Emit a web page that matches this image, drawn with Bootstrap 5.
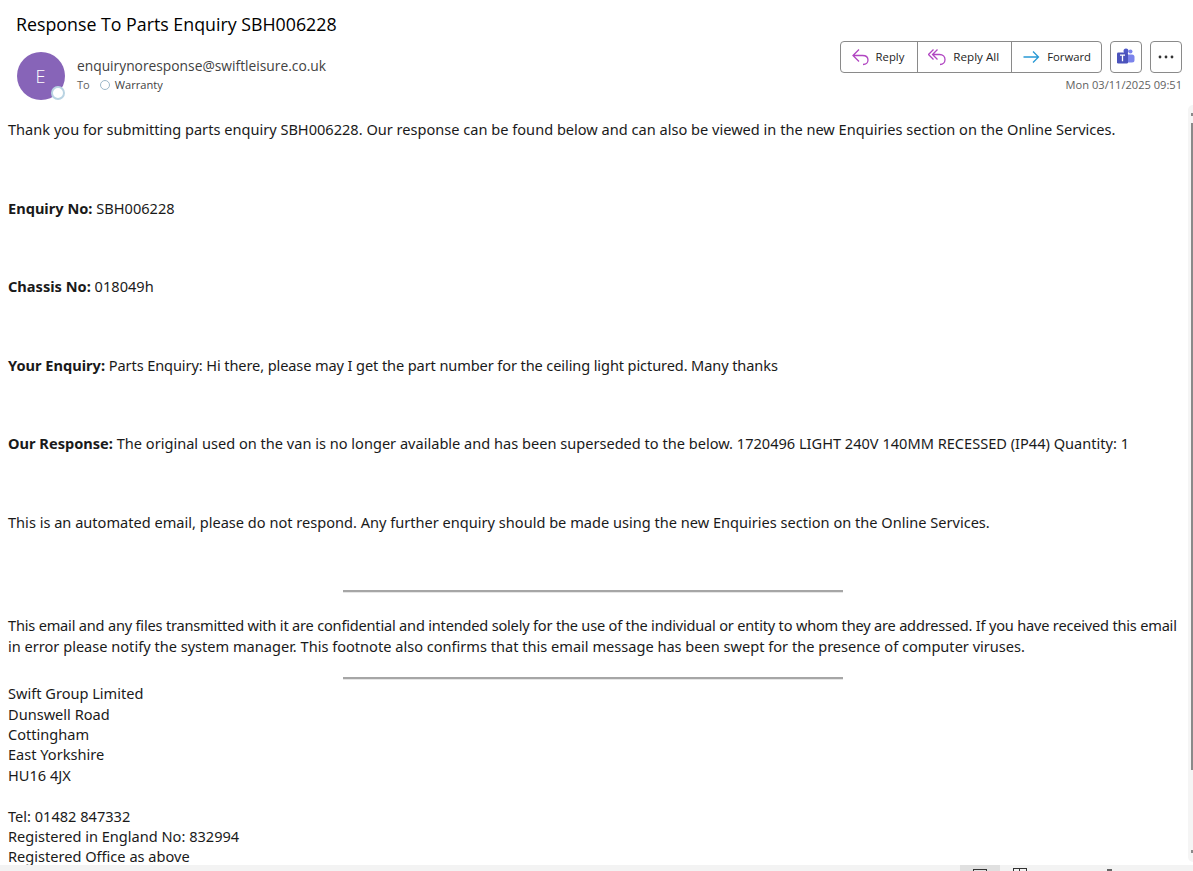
<!doctype html>
<html lang="en"><head><meta charset="utf-8">
<link href="https://cdn.jsdelivr.net/npm/bootstrap@5.3.0/dist/css/bootstrap.min.css" rel="stylesheet">
<style>
html,body{height:100%;overflow:hidden;background:#fff}
.mail-shell{height:871px;display:flex;flex-direction:column;font-family:"Open Sans","Noto Sans",sans-serif;color:#242424}
.mail-main{flex:1;min-height:0;overflow:hidden;position:relative}
.mail-head{height:103px;padding:12px 11px 0 16px}
.mail-subject{font-size:17.8px;line-height:24px;color:#000;margin:0}
.sender-wrap{margin:16px 0 0 1px;gap:12px}
.avatar{width:48px;height:48px;border-radius:50%;background:#8764b8;color:#fff;font-size:18px;font-weight:300;padding-right:1px}
.presence{position:absolute;right:0;bottom:0;width:14px;height:14px;border-radius:50%;background:#fff;border:2px solid #b9d3e2}
.pres-small{display:inline-block;width:10px;height:10px;border-radius:50%;border:1px solid #9db8c9;margin:0 5px 0 10px;vertical-align:-1px}
.sender{font-size:13.8px;line-height:19px;color:#424242;margin-top:4px}
.recips{font-size:11.1px;line-height:16px;color:#424242;margin-top:2px}
.recips .to-lbl{color:#616161}
.right-wrap{margin-top:5px}
.act-group{border:1px solid #8a8a8a;border-radius:4px;height:32px;background:#fff}
.act-btn{height:30px;display:flex;align-items:center;font-size:11.3px;color:#242424;border-right:1px solid #8a8a8a;padding:0 12px 0 10px;gap:7px}
.act-btn:first-child{padding-right:13px}
.act-btn:last-child{border-right:0;padding-right:10px}
.act-btn.wide{font-size:11.65px}
.act-btn svg{width:18px;height:18px;flex-shrink:0}
.act-square{width:32px;height:32px;border:1px solid #8a8a8a;border-radius:4px;display:flex;align-items:center;justify-content:center;background:#fff}
.stamp{font-size:11.1px;line-height:16px;color:#616161;text-align:right;margin-top:4px}
.mail-body{padding:16px 15px 0 8px;height:762px;overflow:hidden;font-family:"Noto Sans",sans-serif;font-size:14.58px;color:#1a1a1a;line-height:20.4px}
.mail-body p{margin:0}
.mail-body b{font-size:14.6px}
.mail-body .gap-para{margin-bottom:58.2px}
.mail-body .gap-last{margin-bottom:58px}
.mail-body .legal{margin:22px 0 21px}
.mail-body .addr{margin-top:3px}
.squeeze-a{letter-spacing:-.11px}
.squeeze-b{letter-spacing:-.2px}
.rule{width:500px;height:3px;margin:0 auto;border-top:2px solid #a6a6a6;border-bottom:1px solid #e6e6e6}
.track{position:absolute;right:0;top:105px;height:757px;width:5px;background:#f5f5f5;border-radius:6px 0 0 6px}
.thumb{position:absolute;right:0;top:18px;width:2px;height:647px;background:#8a8a8a}
.tick{position:absolute;right:0;width:2px;height:3px;background:#8a8a8a}
.status-bar{height:6px;background:#f3f3f3;position:relative;overflow:hidden}
.st-active{position:absolute;left:960px;top:0;width:40px;height:6px;background:#e0e0e0}
.st-ico{position:absolute;border:1px solid #333;width:14px;height:10px;top:4px}
.st-book{top:3px}
.st-book::after{content:"";position:absolute;left:5px;top:0;width:1px;height:10px;background:#333}
.st-dot{position:absolute;left:1107px;top:4px;width:5px;height:3px;background:#666}
</style></head>
<body>
<div class="mail-shell">
<div class="mail-main">
 <div class="mail-head">
  <h1 class="mail-subject fw-normal">Response To Parts Enquiry SBH006228</h1>
  <div class="d-flex justify-content-between">
   <div class="d-flex sender-wrap">
    <div class="avatar position-relative d-flex align-items-center justify-content-center flex-shrink-0">E<span class="presence"></span></div>
    <div><div class="sender">enquirynoresponse@swiftleisure.co.uk</div>
    <div class="recips"><span class="to-lbl">To</span><span class="pres-small"></span>Warranty</div></div>
   </div>
   <div class="right-wrap">
    <div class="d-flex gap-2 align-items-center">
     <div class="act-group d-flex">
      <div class="act-btn"><svg viewBox="0 0 18 18" fill="none" stroke="#b146c2" stroke-width="1.3"><path d="M8 1.500 2 7.500l6 6M2 7.500h9.500c3.500 0 5.500 2 5.500 4.500s-2 4.500-5 4.500"/></svg>Reply</div>
      <div class="act-btn wide"><svg viewBox="0 0 18 18" fill="none" stroke="#b146c2" stroke-width="1.3"><path d="M5.500 1.500 0.500 6.500l5 5M9.500 1.500 4.500 6.500l5 5M4.500 6.500h7c3.500 0 5.500 2.300 5.500 5s-2 5-5 5"/></svg>Reply All</div>
      <div class="act-btn"><svg viewBox="0 0 18 18" fill="none" stroke="#2899d5" stroke-width="1.3"><path d="M1.500 9h15M11 3.500l5.500 5.500-5.500 5.500"/></svg>Forward</div>
     </div>
     <div class="act-square"><svg width="18" height="18" viewBox="0 0 18 18"><circle cx="13.500" cy="3.600" r="2" fill="#7b83eb"/><rect x="9" y="6.500" width="8.500" height="8" rx="2.500" fill="#7b83eb"/><circle cx="9" cy="3" r="2.500" fill="#5059c9"/><rect x="0" y="4.500" width="11" height="11" rx="1.200" fill="#4b53bc"/><path d="M3 7.200h5M5.500 7.200v6" stroke="#fff" stroke-width="1.300"/></svg></div>
     <div class="act-square"><svg width="16" height="4" viewBox="0 0 16 4" fill="#333"><circle cx="2" cy="2" r="1.400"/><circle cx="8" cy="2" r="1.400"/><circle cx="14" cy="2" r="1.400"/></svg></div>
    </div>
    <div class="stamp">Mon 03/11/2025 09:51</div>
   </div>
  </div>
 </div>
 <div class="mail-body">
  <p class="gap-para">Thank you for submitting parts enquiry SBH006228. Our response can be found below and can also be viewed in the new Enquiries section on the Online Services.</p>
  <p class="gap-para"><b>Enquiry No:</b> SBH006228</p>
  <p class="gap-para"><b>Chassis No:</b> 018049h</p>
  <p class="gap-para"><b>Your Enquiry:</b> <span class="squeeze-a">Parts Enquiry: Hi there, please may I get the part number for the ceiling light pictured. Many thanks</span></p>
  <p class="gap-para"><b>Our Response:</b> The original used on the van is no longer available and has been superseded to the below. 1720496 LIGHT 240V 140MM RECESSED (IP44) Quantity: 1</p>
  <p class="gap-last">This is an automated email, please do not respond. Any further enquiry should be made using the new Enquiries section on the Online Services.</p>
  <div class="rule"></div>
  <p class="legal"><span class="squeeze-b">This email and any files transmitted with it are confidential and intended solely for the use of the individual or entity to whom they are addressed. If you have received this email</span> in error please notify the system manager. This footnote also confirms that this email message has been swept for the presence of computer viruses.</p>
  <div class="rule"></div>
  <p class="addr">Swift Group Limited<br>Dunswell Road<br>Cottingham<br>East Yorkshire<br>HU16 4JX<br><br>Tel: 01482 847332<br>Registered in England No: 832994<br>Registered Office as above</p>
 </div>
 <div class="track"><span class="tick" style="top:8px"></span><div class="thumb"></div><span class="tick" style="bottom:9px"></span></div>
</div>
<div class="status-bar"><span class="st-active"></span><span class="st-ico" style="left:973px"></span><span class="st-ico st-book" style="left:1013px"></span><span class="st-dot"></span></div>
</div>
<script src="https://cdn.jsdelivr.net/npm/bootstrap@5.3.0/dist/js/bootstrap.bundle.min.js"></script>
</body></html>
